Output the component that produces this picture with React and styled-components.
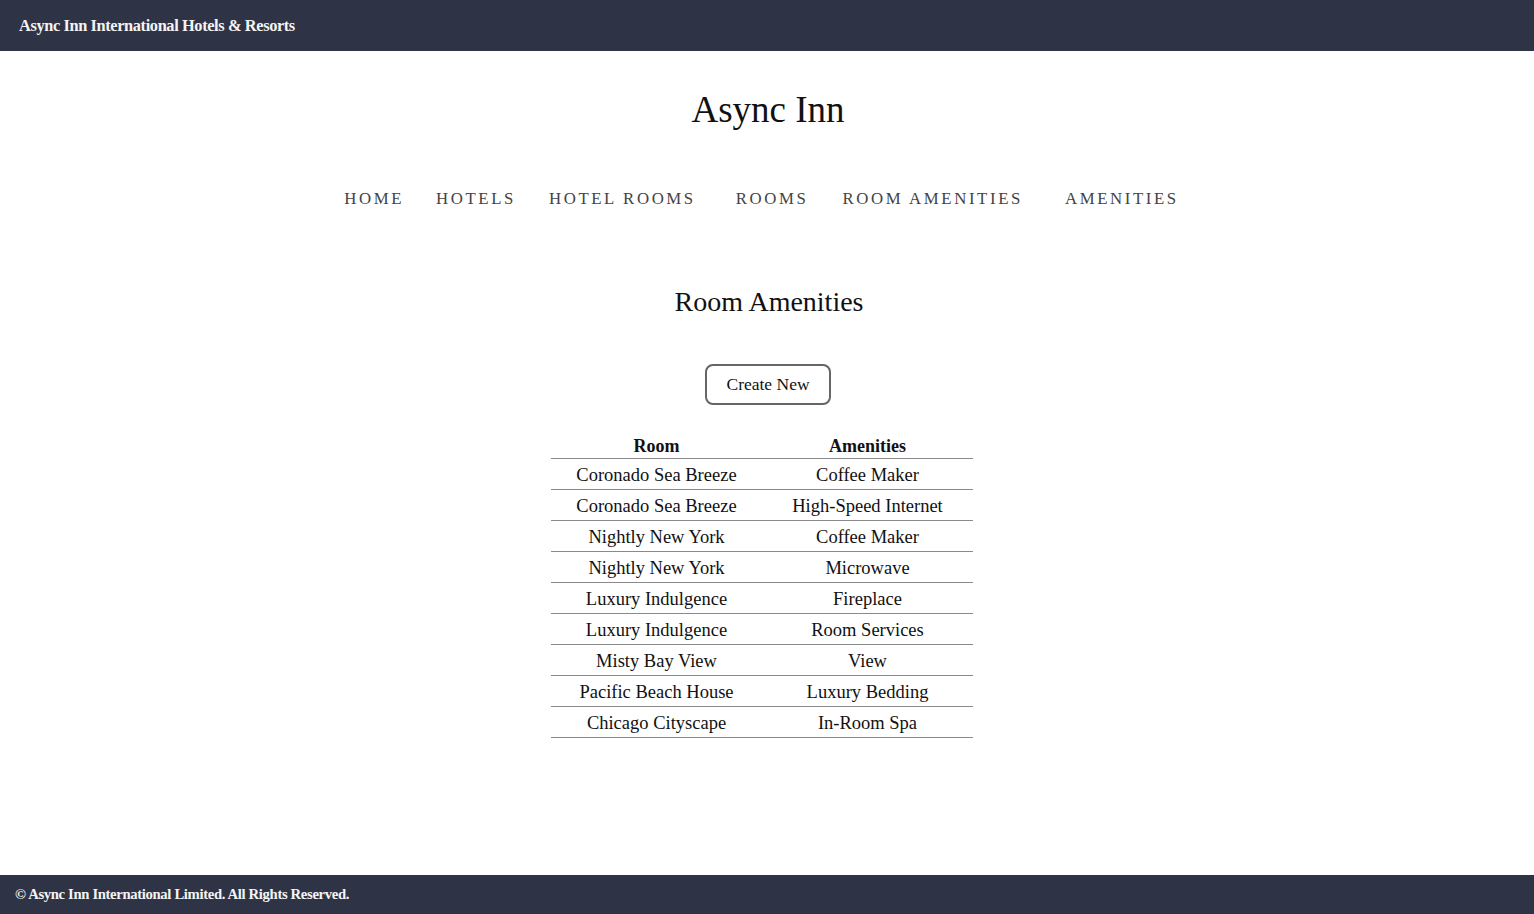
import React from "react";
import styled, { createGlobalStyle } from "styled-components";

const Global = createGlobalStyle`
  html, body { margin: 0; padding: 0; }
  body {
    font-family: "Liberation Serif", "Times New Roman", serif;
    color: #111;
    background: #fff;
  }
`;

const Page = styled.div`
  min-height: 100vh;
  display: flex;
  flex-direction: column;
`;

const TopBar = styled.header`
  height: 51px;
  background: #2f3346;
  display: flex;
  align-items: center;
  padding: 0 19px;
  box-sizing: border-box;
`;

const Brand = styled.span`
  color: #f4f4f4;
  font-size: 16.4px;
  letter-spacing: -0.4px;
  font-weight: 600;
`;

const Main = styled.main`
  flex: 1;
  display: flex;
  flex-direction: column;
  align-items: center;
`;

const Title = styled.h1`
  margin: 37px 0 0;
  font-size: 37px;
  font-weight: 400;
  line-height: 44px;
  color: #111;
  transform: translateX(1px);
`;

const Nav = styled.nav`
  display: flex;
  margin-top: 56px;
  padding-right: 11px;
`;

const NavItem = styled.a`
  font-size: 16.8px;
  letter-spacing: 2.6px;
  color: #444;
  text-decoration: none;
  line-height: 22px;
  margin-left: ${(p) => p.$gap || 0}px;
`;

const Heading = styled.h2`
  margin: 74px 0 0;
  font-size: 28px;
  font-weight: 400;
  line-height: 36px;
  color: #111;
  transform: translateX(2px);
`;

const Button = styled.button`
  margin-top: 44px;
  width: 126px;
  height: 41px;
  border: 2px solid #666;
  border-radius: 8px;
  background: #fff;
  font-family: inherit;
  font-size: 17.5px;
  color: #111;
  padding: 0 0 1px;
  transform: translateX(1px);
`;

const Table = styled.table`
  margin-top: 28px;
  border-collapse: collapse;
  width: 422px;
  transform: translateX(-5px);
`;

const Th = styled.th`
  font-size: 18px;
  font-weight: 700;
  width: 50%;
  height: 24px;
  padding: 0 0 1px;
  border-bottom: 1px solid #8a8a8a;
  text-align: center;
  vertical-align: bottom;
  line-height: 22px;
`;

const Td = styled.td`
  font-size: 18.5px;
  height: 30px;
  padding: 2px 0 0;
  box-sizing: border-box;
  border-bottom: 1px solid #8a8a8a;
  text-align: center;
  line-height: 28px;
`;

const Footer = styled.footer`
  height: 39px;
  background: #2f3346;
  display: flex;
  align-items: center;
  padding: 0 15px;
  box-sizing: border-box;
`;

const FootText = styled.span`
  color: #f4f4f4;
  font-size: 14.7px;
  letter-spacing: -0.35px;
  font-weight: 600;
`;

const navItems = [
  ["HOME", 0],
  ["HOTELS", 32],
  ["HOTEL ROOMS", 33],
  ["ROOMS", 40],
  ["ROOM AMENITIES", 34],
  ["AMENITIES", 42],
];

const rows = [
  ["Coronado Sea Breeze", "Coffee Maker"],
  ["Coronado Sea Breeze", "High-Speed Internet"],
  ["Nightly New York", "Coffee Maker"],
  ["Nightly New York", "Microwave"],
  ["Luxury Indulgence", "Fireplace"],
  ["Luxury Indulgence", "Room Services"],
  ["Misty Bay View", "View"],
  ["Pacific Beach House", "Luxury Bedding"],
  ["Chicago Cityscape", "In-Room Spa"],
];

export default function App() {
  return (
    <Page>
      <Global />
      <TopBar>
        <Brand>Async Inn International Hotels &amp; Resorts</Brand>
      </TopBar>
      <Main>
        <Title>Async Inn</Title>
        <Nav>
          {navItems.map(([label, gap]) => (
            <NavItem key={label} href="#" $gap={gap}>
              {label}
            </NavItem>
          ))}
        </Nav>
        <Heading>Room Amenities</Heading>
        <Button>Create New</Button>
        <Table>
          <thead>
            <tr>
              <Th>Room</Th>
              <Th>Amenities</Th>
            </tr>
          </thead>
          <tbody>
            {rows.map(([room, amenity], i) => (
              <tr key={i}>
                <Td>{room}</Td>
                <Td>{amenity}</Td>
              </tr>
            ))}
          </tbody>
        </Table>
      </Main>
      <Footer>
        <FootText>© Async Inn International Limited. All Rights Reserved.</FootText>
      </Footer>
    </Page>
  );
}
